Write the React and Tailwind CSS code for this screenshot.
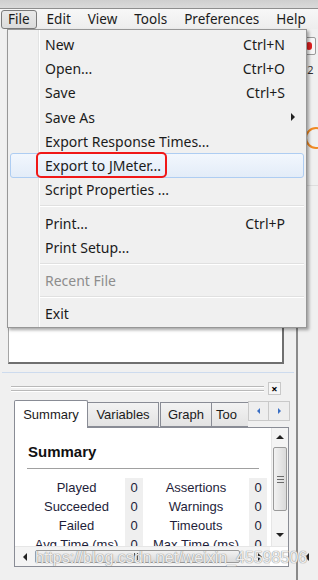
import React from 'react';

const MENU = [
  { label: 'New', keys: 'Ctrl+N' },
  { label: 'Open...', keys: 'Ctrl+O' },
  { label: 'Save', keys: 'Ctrl+S' },
  { label: 'Save As', sub: true },
  { label: 'Export Response Times...' },
  { label: 'Export to JMeter...', active: true },
  { label: 'Script Properties ...' },
  'sep',
  { label: 'Print...', keys: 'Ctrl+P' },
  { label: 'Print Setup...' },
  'sep',
  { label: 'Recent File', disabled: true },
  'sep',
  { label: 'Exit' },
];

const MENUBAR = ['File', 'Edit', 'View', 'Tools', 'Preferences', 'Help'];

const STATS = [
  ['Played', '0', 'Assertions', '0'],
  ['Succeeded', '0', 'Warnings', '0'],
  ['Failed', '0', 'Timeouts', '0'],
  ['Avg Time (ms)', '0', 'Max Time (ms)', '0'],
];

const Arrow = ({ dir }) => {
  const cls = {
    up: 'border-x-[4px] border-x-transparent border-b-[4px] border-b-[#222]',
    down: 'border-x-[4px] border-x-transparent border-t-[4px] border-t-[#222]',
    left: 'border-y-[4px] border-y-transparent border-r-[4px] border-r-[#222]',
    right: 'border-y-[4px] border-y-transparent border-l-[4px] border-l-[#222]',
  }[dir];
  return <span className={`block w-0 h-0 ${cls}`} />;
};

const MenuRow = ({ item }) => {
  if (item === 'sep') {
    return (
      <div className="h-[8.8px] flex items-center pl-[32px] pr-[2px]">
        <div className="w-full h-[2px] border-t border-[#e0e0e0] border-b border-b-white" />
      </div>
    );
  }
  return (
    <div
      className={`relative h-[24.3px] mx-[2px] flex items-center pl-[34px] pr-[18px] border rounded-[3px] ${
        item.active
          ? 'border-[#aecdf2] bg-gradient-to-b from-[#f2f7fd] to-[#e3ecf8]'
          : 'border-transparent'
      } ${item.disabled ? 'text-[#8d8d8d]' : 'text-[#1b1b1b]'}`}
    >
      <span className="flex-1">{item.label}</span>
      {item.keys && <span>{item.keys}</span>}
      {item.sub && (
        <span className="absolute right-[8px] top-1/2 -translate-y-1/2">
          <Arrow dir="right" />
        </span>
      )}
      {item.active && (
        <span className="absolute left-[25px] top-[-2px] w-[131px] h-[26px] border-2 border-[#f01818] rounded-[5px]" />
      )}
    </div>
  );
};

const FileMenu = () => (
  <div className="absolute left-[7px] top-[29px] w-[300px] h-[299px] bg-[#f0f0f0] border border-[#979797] shadow-[2px_2px_3px_rgba(0,0,0,0.35)] pt-[2px] text-[14px] font-['Noto_Sans',sans-serif]">
    <div className="absolute left-[30px] top-0 bottom-0 w-[2px] border-l border-[#e2e3e3] border-r border-r-white" />
    <div className="relative flex flex-col">
      {MENU.map((item, i) => (
        <MenuRow key={i} item={item} />
      ))}
    </div>
  </div>
);

const VScroll = () => (
  <div className="w-[17px] flex flex-col bg-[#f4f4f4] border-l border-[#e6e6e6]">
    <div className="h-[17px] flex items-center justify-center">
      <Arrow dir="up" />
    </div>
    <div className="flex-1 px-[1px]">
      <div className="mt-[2px] h-[64px] rounded-[2px] border border-[#9a9a9a] bg-gradient-to-r from-[#f2f2f2] to-[#dadada] flex flex-col items-center justify-center gap-[2px]">
        <span className="w-[7px] h-px bg-[#6b6b6b]" />
        <span className="w-[7px] h-px bg-[#6b6b6b]" />
        <span className="w-[7px] h-px bg-[#6b6b6b]" />
      </div>
    </div>
    <div className="h-[17px] mb-[3px] flex items-center justify-center">
      <Arrow dir="down" />
    </div>
  </div>
);

const HScroll = () => (
  <div className="h-[20px] flex bg-[#f4f4f4] border-t border-[#e6e6e6]">
    <div className="w-[20px] flex items-center justify-center">
      <Arrow dir="left" />
    </div>
    <div className="w-[205px] my-[3px] rounded-[2px] border border-[#9a9a9a] bg-gradient-to-b from-[#f2f2f2] to-[#dadada] flex items-center justify-center gap-[2px]">
      <span className="w-px h-[7px] bg-[#555]" />
      <span className="w-px h-[7px] bg-[#555]" />
      <span className="w-px h-[7px] bg-[#555]" />
    </div>
    <div className="flex-1 flex items-center justify-end pr-[8px]">
      <Arrow dir="right" />
    </div>
    <div className="w-[18px] bg-white" />
  </div>
);

const SummaryPanel = () => (
  <div className="flex flex-col">
    <div className="h-[28px] flex items-end text-[13px] font-['Liberation_Sans',sans-serif] text-[#1b1b1b]">
      <div className="h-[28px] w-[74px] border border-b-0 border-[#898c95] bg-white flex items-center justify-center rounded-t-[2px] relative top-px">
        Summary
      </div>
      <div className="h-[25px] w-[71px] border border-l-0 border-[#898c95] bg-gradient-to-b from-[#f3f3f3] to-[#e3e3e3] flex items-center justify-center">
        Variables
      </div>
      <div className="h-[25px] w-[52px] ml-[1px] border border-[#898c95] bg-gradient-to-b from-[#f3f3f3] to-[#e3e3e3] flex items-center justify-center">
        Graph
      </div>
      <div className="h-[25px] w-[36px] border border-l-0 border-r-0 border-[#898c95] bg-gradient-to-b from-[#f3f3f3] to-[#e3e3e3] flex items-center pl-[4px] overflow-hidden">
        Too
      </div>
      <div className="self-start mt-[2px] flex">
        <div className="w-[21px] h-[20px] border border-[#c9c9c9] bg-[#eeeeee] flex items-center justify-center">
          <span className="block w-0 h-0 border-y-[3px] border-y-transparent border-r-[3px] border-r-[#3a6fc4]" />
        </div>
        <div className="w-[21px] h-[20px] border border-l-0 border-[#c9c9c9] bg-[#eeeeee] flex items-center justify-center">
          <span className="block w-0 h-0 border-y-[3px] border-y-transparent border-l-[3px] border-l-[#3a6fc4]" />
        </div>
      </div>
    </div>
    <div className="h-[140px] w-[275px] border border-[#898c95] bg-white flex flex-col">
      <div className="flex-1 flex min-h-0">
        <div className="flex-1 overflow-hidden font-['Liberation_Sans',sans-serif]">
          <div className="pt-[15px] pl-[13px] text-[15px] font-bold text-[#111] leading-[18px]">Summary</div>
          <div className="mt-[7px] ml-[12px] mr-[12px] h-px bg-[#a0a0a0]" />
          <div className="mt-[9px] ml-[13px] grid grid-cols-[97px_18px_106px_18px] text-[13px] text-[#1e1e3a]">
            {STATS.map((r, i) => (
              <React.Fragment key={i}>
                <div className="h-[19px] flex items-center justify-center whitespace-nowrap">{r[0]}</div>
                <div className="h-[19px] flex items-center justify-center bg-[#efefef]">{r[1]}</div>
                <div className="h-[19px] flex items-center justify-center whitespace-nowrap">{r[2]}</div>
                <div className="h-[19px] flex items-center justify-center bg-[#efefef]">{r[3]}</div>
              </React.Fragment>
            ))}
          </div>
        </div>
        <VScroll />
      </div>
      <HScroll />
    </div>
  </div>
);

export default function App() {
  return (
    <div className="relative w-[318px] h-[580px] overflow-hidden bg-[#f0f0f0] flex flex-col font-['Noto_Sans',sans-serif]">
      <div className="h-[9px] bg-gradient-to-b from-[#cfcfcf] to-[#dadada] border-b border-[#8e8e8e]" />
      <div className="flex-1 flex">
        <div className="w-[6px] bg-gradient-to-r from-[#9b9b9b] via-[#c9c9c9] to-[#8f8f8f]" />
        <div className="flex-1 flex flex-col">
          <div className="h-[20px] flex items-center pl-[1px] text-[13.5px] text-[#1b1b1b] bg-gradient-to-b from-[#f7f7f7] to-[#ededed]">
            {MENUBAR.map((m, i) => (
              <span
                key={m}
                className={`h-[19px] flex items-center px-[6px] mr-[3px] rounded-[3px] border ${
                  i === 0 ? 'border-[#7b7b7b] bg-gradient-to-b from-[#e9e9e9] to-[#dcdcdc]' : 'border-transparent'
                }`}
              >
                {m}
              </span>
            ))}
          </div>
          <div className="flex-1 flex">
            <div className="w-[296px] flex flex-col">
              <div className="pl-[8px] pr-[12px] pt-[6px]">
                <div className="h-[329px] bg-white border-l border-t border-[#a5a5a5] border-r-2 border-b-2 border-r-[#6f6f6f] border-b-[#6f6f6f]" />
              </div>
              <div className="mt-[8px] mx-[2px] h-px bg-[#cddbee]" />
              <div className="mt-[9px] h-[13px] flex items-center pl-[11px] pr-[15px] gap-[4px]">
                <div className="flex-1 flex flex-col gap-[2px]">
                  <div className="h-[2px] border-t border-[#b9b9b9] border-b border-b-white" />
                  <div className="h-[2px] border-t border-[#b9b9b9] border-b border-b-white" />
                </div>
                <div className="w-[13px] h-[13px] border border-[#c8c8c8] bg-[#f6f6f6] flex items-center justify-center text-[11px] font-bold leading-none text-black">
                  ×
                </div>
              </div>
              <div className="mt-[4px] pl-[14px]">
                <SummaryPanel />
              </div>
            </div>
            <div className="flex-1 border-l-2 border-[#8a8a8a] flex flex-col pl-[4px]">
              <div className="mt-[8px] w-[14px] h-[18px] border border-[#9a9a9a] rounded-[2px] bg-[#f7f7f7] flex items-center justify-center">
                <span className="w-[6px] h-[8px] rounded-full bg-[#e02020]" />
              </div>
              <div className="mt-[9px] text-[11px] leading-none text-[#333]">s2</div>
              <div className="mt-[52px] w-[22px] h-[22px] ml-[3px] rounded-full border-2 border-[#f08a24]" />
              <div className="mt-[36px] h-px bg-[#dedede]" />
              <div className="flex-1" />
              <div className="mb-[19px] pl-[3px]">
                <Arrow dir="left" />
              </div>
            </div>
          </div>
        </div>
      </div>
      <FileMenu />
      <div className="absolute left-[35px] top-[548px] text-[16px] leading-[20px] font-['Liberation_Sans',sans-serif] text-white/85 [text-shadow:0_0_1px_#8a8a8a,0_0_1px_#8a8a8a] whitespace-nowrap">
        https://blog.csdn.net/weixin_45598506
      </div>
    </div>
  );
}
